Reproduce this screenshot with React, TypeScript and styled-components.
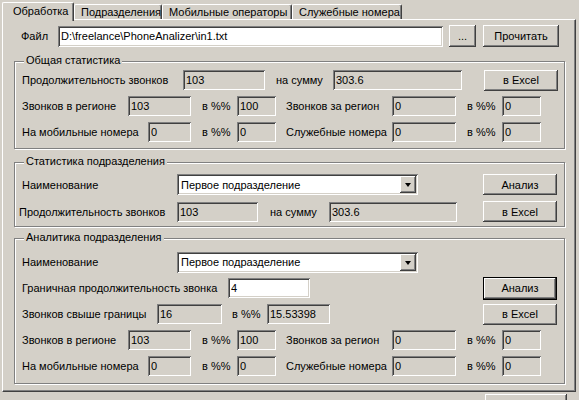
import styled, { createGlobalStyle, css } from "styled-components";

const face = "#d4d0c8";
const shadow = "#808080";
const dark = "#404040";

const GlobalStyle = createGlobalStyle`
  html, body {
    margin: 0;
    padding: 0;
    background: ${face};
    overflow: hidden;
  }
  body {
    font-family: "Liberation Sans", Arial, sans-serif;
    font-size: 11px;
    color: #000;
  }
`;

const raised = css`
  box-shadow: inset -1px -1px ${dark}, inset 1px 1px #fff,
    inset -2px -2px ${shadow}, inset 2px 2px ${face};
`;

const sunken = css`
  box-shadow: inset 1px 1px ${shadow}, inset -1px -1px #fff,
    inset 2px 2px ${dark}, inset -2px -2px ${face};
`;

const Window = styled.div`
  width: 579px;
  height: 400px;
  padding-top: 2px;
  box-sizing: border-box;
  overflow: hidden;
`;

const TabStrip = styled.div`
  display: flex;
  align-items: flex-end;
  height: 17px;
  padding-left: 2px;
`;

const Tab = styled.div<{ $active?: boolean; $w: number }>`
  position: relative;
  box-sizing: border-box;
  width: ${(p) => p.$w}px;
  height: ${(p) => (p.$active ? 19 : 15)}px;
  margin-bottom: ${(p) => (p.$active ? -2 : 0)}px;
  padding-left: ${(p) => (p.$active ? 10 : 6)}px;
  padding-top: ${(p) => (p.$active ? 2 : 1)}px;
  background: ${face};
  border-radius: 2px 2px 0 0;
  border-top: 1px solid #fff;
  border-left: 1px solid #fff;
  border-right: 1px solid ${dark};
  box-shadow: inset -1px 0 ${shadow};
  z-index: ${(p) => (p.$active ? 1 : 0)};
  white-space: nowrap;
  line-height: 13px;
`;

const TabBody = styled.div`
  box-sizing: border-box;
  width: 574px;
  height: 373px;
  margin-left: 2px;
  border-top: 1px solid #fff;
  border-left: 1px solid #fff;
  border-right: 1px solid ${dark};
  border-bottom: 1px solid ${dark};
  box-shadow: inset -1px -1px ${shadow}, inset 1px 1px ${face};
  padding: 1px 1px 0 1px;
`;

const Row = styled.div<{ $h?: number; $ml?: number; $mt?: number }>`
  display: flex;
  align-items: center;
  height: ${(p) => p.$h ?? 26}px;
  margin-left: ${(p) => p.$ml ?? 0}px;
  margin-top: ${(p) => p.$mt ?? 0}px;
`;

const Label = styled.span<{ $w: number; $pl?: number }>`
  box-sizing: border-box;
  flex: none;
  width: ${(p) => p.$w}px;
  padding-left: ${(p) => p.$pl ?? 0}px;
  white-space: nowrap;
`;

const Field = styled.input<{ $w: number; $white?: boolean; $h?: number }>`
  flex: none;
  box-sizing: border-box;
  width: ${(p) => p.$w}px;
  height: ${(p) => p.$h ?? 20}px;
  margin: 0;
  padding: 0 3px;
  border: none;
  outline: none;
  font: inherit;
  color: #000;
  background: ${(p) => (p.$white ? "#fff" : face)};
  ${sunken}
`;

const Button = styled.button<{ $w: number; $h?: number; $ml?: number; $default?: boolean }>`
  flex: none;
  box-sizing: border-box;
  width: ${(p) => p.$w}px;
  height: ${(p) => p.$h ?? 21}px;
  margin: 0 0 0 ${(p) => p.$ml ?? 0}px;
  padding: 0;
  border: ${(p) => (p.$default ? "1px solid #000" : "none")};
  background: ${face};
  font: inherit;
  color: #000;
  ${raised}
`;

const Combo = styled.div<{ $w: number }>`
  flex: none;
  box-sizing: border-box;
  display: flex;
  align-items: center;
  width: ${(p) => p.$w}px;
  height: 21px;
  padding: 2px;
  background: #fff;
  ${sunken}
`;

const ComboText = styled.span`
  flex: 1;
  padding-left: 2px;
  white-space: nowrap;
`;

const DropButton = styled.span`
  box-sizing: border-box;
  display: flex;
  align-items: center;
  justify-content: center;
  width: 16px;
  height: 17px;
  background: ${face};
  ${raised}
`;

const Arrow = styled.span`
  width: 0;
  height: 0;
  border-left: 3.5px solid transparent;
  border-right: 3.5px solid transparent;
  border-top: 4px solid #000;
  margin-top: 1px;
`;

const Group = styled.div<{ $pt: number; $pb: number; $mt: number }>`
  position: relative;
  box-sizing: border-box;
  width: 551px;
  margin: ${(p) => p.$mt}px 0 0 10px;
  padding: ${(p) => p.$pt}px 0 ${(p) => p.$pb}px 7px;
  border: 1px solid ${shadow};
  box-shadow: inset 1px 1px #fff, 1px 1px #fff;
`;

const Caption = styled.span`
  position: absolute;
  top: -8px;
  left: 9px;
  padding: 0 2px;
  background: ${face};
  white-space: nowrap;
`;

const Footer = styled.div`
  padding: 2px 0 0 485px;
`;

const Combobox = ({ w, text }: { w: number; text: string }) => (
  <Combo $w={w}>
    <ComboText>{text}</ComboText>
    <DropButton>
      <Arrow />
    </DropButton>
  </Combo>
);

const CountsRows = () => (
  <>
    <Row>
      <Label $w={106}>Звонков в регионе</Label>
      <Field $w={63} readOnly value="103" />
      <Label $w={46} $pl={11}>в %%</Label>
      <Field $w={39} readOnly value="100" />
      <Label $w={116} $pl={10}>Звонков за регион</Label>
      <Field $w={64} readOnly value="0" />
      <Label $w={46} $pl={11}>в %%</Label>
      <Field $w={39} readOnly value="0" />
    </Row>
    <Row>
      <Label $w={126}>На мобильные номера</Label>
      <Field $w={43} readOnly value="0" />
      <Label $w={46} $pl={11}>в %%</Label>
      <Field $w={39} readOnly value="0" />
      <Label $w={116} $pl={10}>Служебные номера</Label>
      <Field $w={64} readOnly value="0" />
      <Label $w={46} $pl={11}>в %%</Label>
      <Field $w={39} readOnly value="0" />
    </Row>
  </>
);

const App = () => {
  return (
    <Window>
      <GlobalStyle />
      <TabStrip>
        <Tab $active $w={72}>Обработка</Tab>
        <Tab $w={88}>Подразделения</Tab>
        <Tab $w={130}>Мобильные операторы</Tab>
        <Tab $w={110}>Служебные номера</Tab>
      </TabStrip>

      <TabBody>
        <Row $h={22} $ml={17} $mt={4}>
          <Label $w={37}>Файл</Label>
          <Field $w={385} $h={21} $white readOnly value="D:\freelance\PhoneAnalizer\in1.txt" />
          <Button $w={27} $h={22} $ml={6}>...</Button>
          <Button $w={76} $h={22} $ml={7}>Прочитать</Button>
        </Row>

        <Group $mt={14} $pt={5} $pb={3}>
          <Caption>Общая статистика</Caption>
          <Row>
            <Label $w={161}>Продолжительность звонков</Label>
            <Field $w={82} readOnly value="103" />
            <Label $w={68} $pl={11}>на сумму</Label>
            <Field $w={129} readOnly value="303.6" />
            <Button $w={74} $ml={22}>в Excel</Button>
          </Row>
          <CountsRows />
        </Group>

        <Group $mt={13} $pt={8} $pb={1}>
          <Caption>Статистика подразделения</Caption>
          <Row $h={27}>
            <Label $w={155}>Наименование</Label>
            <Combobox w={241} text="Первое подразделение" />
            <Button $w={74} $ml={65}>Анализ</Button>
          </Row>
          <Row $h={27} $ml={-3}>
            <Label $w={158}>Продолжительность звонков</Label>
            <Field $w={81} readOnly value="103" />
            <Label $w={71} $pl={12}>на сумму</Label>
            <Field $w={128} readOnly value="303.6" />
            <Button $w={74} $ml={26}>в Excel</Button>
          </Row>
        </Group>

        <Group $mt={11} $pt={10} $pb={4}>
          <Caption>Аналитика подразделения</Caption>
          <Row>
            <Label $w={155}>Наименование</Label>
            <Combobox w={241} text="Первое подразделение" />
          </Row>
          <Row>
            <Label $w={206}>Граничная продолжительность звонка</Label>
            <Field $w={82} $white readOnly value="4" />
            <Button $w={74} $h={23} $ml={173} $default>Анализ</Button>
          </Row>
          <Row>
            <Label $w={135}>Звонков свыше границы</Label>
            <Field $w={65} readOnly value="16" />
            <Label $w={45} $pl={10}>в %%</Label>
            <Field $w={63} readOnly value="15.53398" />
            <Button $w={74} $ml={153}>в Excel</Button>
          </Row>
          <CountsRows />
        </Group>
      </TabBody>

      <Footer>
        <Button $w={82} $h={23} aria-label="Закрыть" />
      </Footer>
    </Window>
  );
};

export default App;
